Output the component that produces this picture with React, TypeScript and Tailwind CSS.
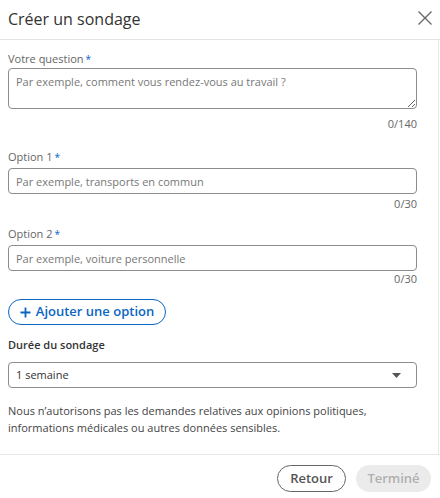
import React from "react";

const Label = ({ text, required = true }: { text: string; required?: boolean }) => (
  <div className="text-[11px] leading-[16px] text-[#666]">
    {text}
    {required && <span className="text-[#0a66c2] ml-[2px] align-top text-[10px]">*</span>}
  </div>
);

const Counter = ({ value, className }: { value: string; className: string }) => (
  <div className={`text-[11px] leading-[16px] text-[#666] text-right ${className}`}>{value}</div>
);

const App = () => {
  return (
    <div className="w-[440px] h-[498px] bg-white font-['Open_Sans',sans-serif] flex flex-col overflow-hidden">
      {/* Header */}
      <header className="h-[40px] shrink-0 flex items-center justify-between pl-2 pr-2 border-b border-[#e3e3e3]">
        <h2 className="text-[16px] text-[#333] leading-none -mt-[2px]">Créer un sondage</h2>
        <button className="w-[15px] h-[15px] -mt-[4px] flex items-center justify-center">
          <svg width="14" height="14" viewBox="0 0 14 14" fill="none" stroke="#666" strokeWidth="1.3">
            <path d="M0.5 0.5 L13.5 13.5 M13.5 0.5 L0.5 13.5" />
          </svg>
        </button>
      </header>

      {/* Body */}
      <main className="h-[414px] w-[439px] shrink-0 border-r border-[#e6e6e6] pl-2 pr-[21px] pt-[11px]">
        <Label text="Votre question" />
        <textarea
          className="mt-[1px] block w-full h-[41px] border border-[#8c8c8c] rounded-[4px] px-[7px] pt-[5px] text-[11px] text-[#333] placeholder:text-[#777] outline-none resize-y"
          placeholder="Par exemple, comment vous rendez-vous au travail ?"
        />
        <Counter value="0/140" className="mt-[7px]" />

        <div className="mt-[17px]">
          <Label text="Option 1" />
        </div>
        <input
          className="mt-[3px] block w-full h-[26px] border border-[#8c8c8c] rounded-[4px] px-[7px] text-[11px] text-[#333] placeholder:text-[#777] outline-none"
          placeholder="Par exemple, transports en commun"
        />
        <Counter value="0/30" className="mt-[2px]" />

        <div className="mt-[14px]">
          <Label text="Option 2" />
        </div>
        <input
          className="mt-[3px] block w-full h-[26px] border border-[#8c8c8c] rounded-[4px] px-[7px] text-[11px] text-[#333] placeholder:text-[#777] outline-none"
          placeholder="Par exemple, voiture personnelle"
        />
        <Counter value="0/30" className="mt-0" />

        <button className="mt-[12px] h-[26px] w-[158px] rounded-full border border-[#0a66c2] flex items-center justify-center gap-[5px] text-[#0a66c2] text-[13px] font-semibold">
          <svg width="11" height="11" viewBox="0 0 11 11" fill="none" stroke="#0a66c2" strokeWidth="1.8">
            <path d="M5.5 0.5 V10.5 M0.5 5.5 H10.5" />
          </svg>
          Ajouter une option
        </button>

        <div className="mt-[12px] text-[11px] leading-[16px] font-semibold text-[#333]">Durée du sondage</div>
        <div className="mt-[9px] h-[26px] w-full border border-[#8c8c8c] rounded-[4px] flex items-center justify-between pl-[7px] pr-[15px]">
          <span className="text-[11px] text-[#333]">1 semaine</span>
          <svg width="9" height="5" viewBox="0 0 9 5">
            <path d="M0 0 H9 L4.5 5 Z" fill="#555" />
          </svg>
        </div>

        <p className="mt-[14px] text-[11px] leading-[17px] text-[#444]">
          Nous n’autorisons pas les demandes relatives aux opinions politiques,
          <br />
          informations médicales ou autres données sensibles.
        </p>
      </main>

      {/* Footer */}
      <footer className="h-[44px] shrink-0 border-t border-[#e6e6e6] flex items-start justify-end gap-[10px] pt-[10px] pr-[9px]">
        <button className="h-[27px] w-[69px] rounded-full border border-[#666] text-[13px] font-semibold text-[#555]">
          Retour
        </button>
        <button className="h-[27px] w-[75px] rounded-full bg-[#ebebeb] text-[13px] font-semibold text-[#b0b0b0]">
          Terminé
        </button>
      </footer>
    </div>
  );
};

export default App;
